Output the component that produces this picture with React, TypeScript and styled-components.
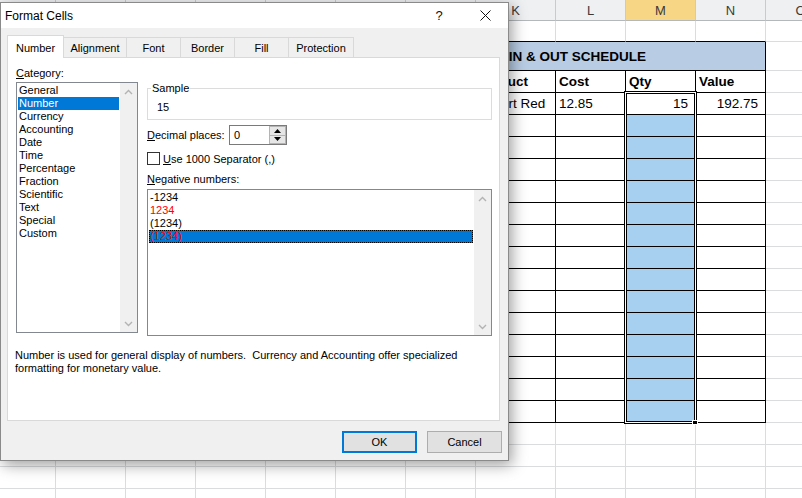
import React from 'react';
import styled, { createGlobalStyle } from 'styled-components';

const GRID = '#dadcdd';
const INK = '#000';

const GlobalStyle = createGlobalStyle`
  html, body { margin: 0; padding: 0; background: #fff; }
  body { overflow: hidden; font-family: "Liberation Sans", Arial, sans-serif; }
  * { box-sizing: border-box; }
`;

const Page = styled.div`
  position: relative;
  width: 802px;
  height: 498px;
  overflow: hidden;
  background: #fff;
`;

/* ---------------- spreadsheet ---------------- */

const Sheet = styled.div`
  display: flex;
  flex-direction: column;
  width: 920px;
  font-family: "Liberation Sans", Arial, sans-serif;
  font-size: 13.5px;
  color: #000;
`;

const Row = styled.div<{ $h: number }>`
  display: flex;
  flex: none;
  height: ${(p) => p.$h}px;
`;

const ColHead = styled.div<{ $w: number; $sel?: boolean }>`
  flex: none;
  width: ${(p) => p.$w}px;
  height: 100%;
  display: flex;
  align-items: center;
  justify-content: center;
  background: ${(p) => (p.$sel ? '#f7d685' : '#eef0f2')};
  border-right: 1px solid #c8cacd;
  border-bottom: 1px solid #b5b8bb;
  color: #3a3a3a;
  font-size: 13px;
`;

const Cell = styled.div<{
  $w: number;
  $bg?: string;
  $r?: string;
  $b?: string;
  $right?: boolean;
  $bold?: boolean;
  $pl?: number;
}>`
  flex: none;
  width: ${(p) => p.$w}px;
  height: 100%;
  display: flex;
  align-items: center;
  justify-content: ${(p) => (p.$right ? 'flex-end' : 'flex-start')};
  padding: 0 ${(p) => (p.$right ? 7 : 0)}px 0 ${(p) => p.$pl ?? 3}px;
  background: ${(p) => p.$bg ?? 'transparent'};
  border-right: 1px solid ${(p) => p.$r ?? GRID};
  border-bottom: 1px solid ${(p) => p.$b ?? GRID};
  font-weight: ${(p) => (p.$bold ? 700 : 400)};
  white-space: nowrap;
  overflow: hidden;
`;

const Selection = styled.div`
  position: absolute;
  left: 624px;
  top: 91px;
  width: 73px;
  height: 333px;
  border: 1px solid #000;
  box-shadow: inset 0 0 0 1px #fff, inset 0 0 0 2px #000;
  pointer-events: none;
`;

const FillHandle = styled.div`
  position: absolute;
  left: 692px;
  top: 420px;
  width: 6px;
  height: 5px;
  background: #000;
  border: 1px solid #fff;
`;

type Col = { id: string; w: number; pl?: number };
const COLS: Col[] = [
  { id: 'D', w: 56 },
  { id: 'E', w: 70 },
  { id: 'F', w: 70 },
  { id: 'G', w: 70 },
  { id: 'H', w: 70 },
  { id: 'I', w: 70 },
  { id: 'J', w: 70 },
  { id: 'K', w: 80, pl: 1 },
  { id: 'L', w: 70 },
  { id: 'M', w: 70 },
  { id: 'N', w: 70 },
  { id: 'O', w: 70 },
  { id: 'P', w: 70 },
];
const T_START = 6; // J
const T_END = 10; // N
const inTable = (i: number) => i >= T_START && i <= T_END;

type CellSpec = { text?: string; right?: boolean; bold?: boolean };

const HEAD: CellSpec[] = [
  { text: 'Date', bold: true },
  { text: 'Product', bold: true },
  { text: 'Cost', bold: true },
  { text: 'Qty', bold: true },
  { text: 'Value', bold: true },
];
const DATA: CellSpec[] = [
  { text: '' },
  { text: 'Desert Red' },
  { text: '12.85' },
  { text: '15', right: true },
  { text: '192.75', right: true },
];

function TableRow({ specs, blueQty }: { specs?: CellSpec[]; blueQty?: boolean }) {
  return (
    <Row $h={22}>
      {COLS.map((c, i) => {
        const t = inTable(i);
        const s = t && specs ? specs[i - T_START] : undefined;
        return (
          <Cell
            key={c.id}
            $w={c.w}
            $pl={c.pl}
            $r={t || i === T_START - 1 ? INK : GRID}
            $b={t ? INK : GRID}
            $bg={blueQty && c.id === 'M' ? '#a7cff0' : undefined}
            $right={s?.right}
            $bold={s?.bold}
          >
            {s?.text}
          </Cell>
        );
      })}
    </Row>
  );
}

function Spreadsheet() {
  const mergedW = COLS.slice(T_START, T_END + 1).reduce((a, c) => a + c.w, 0);
  return (
    <Sheet>
      <Row $h={21}>
        {COLS.map((c) => (
          <ColHead key={c.id} $w={c.w} $sel={c.id === 'M'}>
            {c.id}
          </ColHead>
        ))}
      </Row>
      <Row $h={21}>
        {COLS.map((c, i) => (
          <Cell key={c.id} $w={c.w} $b={inTable(i) ? INK : GRID} />
        ))}
      </Row>
      <Row $h={29}>
        {COLS.slice(0, T_START).map((c, i) => (
          <Cell key={c.id} $w={c.w} $r={i === T_START - 1 ? INK : GRID} />
        ))}
        <Cell $w={mergedW} $bg="#b8cce4" $r={INK} $b={INK} $bold $pl={52}>
          STOCK IN &amp; OUT SCHEDULE
        </Cell>
        {COLS.slice(T_END + 1).map((c) => (
          <Cell key={c.id} $w={c.w} />
        ))}
      </Row>
      <TableRow specs={HEAD} />
      <TableRow specs={DATA} />
      {Array.from({ length: 14 }).map((_, i) => (
        <TableRow key={i} blueQty />
      ))}
      {Array.from({ length: 4 }).map((_, r) => (
        <Row key={r} $h={22}>
          {COLS.map((c) => (
            <Cell key={c.id} $w={c.w} />
          ))}
        </Row>
      ))}
    </Sheet>
  );
}

/* ---------------- dialog ---------------- */

const Dialog = styled.div`
  position: absolute;
  left: 0;
  top: 2px;
  width: 509px;
  display: flex;
  flex-direction: column;
  background: #f0f0f0;
  border: 1px solid #8a8a8a;
  box-shadow: 3px 4px 14px rgba(0, 0, 0, 0.38);
  font-family: "Liberation Sans", Arial, sans-serif;
  font-size: 11px;
  color: #000;
`;

const TitleBar = styled.div`
  height: 25px;
  background: #fff;
  display: flex;
  align-items: center;
  padding-left: 4px;
`;

const TitleText = styled.div`
  flex: 1;
  font-size: 12px;
`;

const TitleButton = styled.div`
  width: 46px;
  height: 100%;
  display: flex;
  align-items: center;
  justify-content: center;
  font-size: 13px;
  color: #111;
`;

const Body = styled.div`
  display: flex;
  flex-direction: column;
  padding: 7px 8px 7px 6px;
`;

const TabStrip = styled.div`
  display: flex;
  align-items: flex-end;
  height: 22px;
`;

const Tab = styled.div<{ $w: number; $active?: boolean }>`
  position: relative;
  z-index: ${(p) => (p.$active ? 2 : 1)};
  flex: none;
  width: ${(p) => p.$w}px;
  height: ${(p) => (p.$active ? 23 : 20)}px;
  margin-bottom: ${(p) => (p.$active ? -1 : 0)}px;
  margin-left: -1px;
  padding-top: ${(p) => (p.$active ? 1 : 0)}px;
  border: 1px solid #d9d9d9;
  border-bottom: none;
  background: ${(p) => (p.$active ? '#fff' : '#f0f0f0')};
  display: flex;
  align-items: center;
  justify-content: center;
  &:first-child {
    margin-left: 0;
  }
`;

const Panel = styled.div`
  height: 364px;
  background: #fff;
  border: 1px solid #d9d9d9;
  padding: 9px 7px 0 8px;
  display: flex;
  flex-direction: column;
`;

const Columns = styled.div`
  display: grid;
  grid-template-columns: 122px 345px;
  column-gap: 9px;
  align-items: start;
`;

const Column = styled.div<{ $top?: number }>`
  display: flex;
  flex-direction: column;
  padding-top: ${(p) => p.$top ?? 0}px;
`;

const Label = styled.div<{ $mt?: number; $mb?: number }>`
  line-height: 13px;
  height: 13px;
  margin-top: ${(p) => p.$mt ?? 0}px;
  margin-bottom: ${(p) => p.$mb ?? 0}px;
  white-space: nowrap;
`;

const ListBox = styled.div<{ $h: number }>`
  height: ${(p) => p.$h}px;
  border: 1px solid #828790;
  background: #fff;
  display: flex;
`;

const ListItems = styled.div`
  flex: 1;
  padding: 1px;
  overflow: hidden;
`;

const ListItem = styled.div<{ $sel?: boolean; $red?: boolean; $focus?: boolean }>`
  height: 13px;
  line-height: 13px;
  padding-left: 1px;
  white-space: nowrap;
  color: ${(p) => (p.$red ? '#ff0000' : p.$sel ? '#fff' : '#000')};
  background: ${(p) => (p.$sel ? '#0078d7' : 'transparent')};
  outline: ${(p) => (p.$focus ? '1px dotted #000' : 'none')};
  outline-offset: -1px;
`;

const ScrollBar = styled.div`
  width: 17px;
  flex: none;
  background: #f0f0f0;
  display: flex;
  flex-direction: column;
  justify-content: space-between;
`;

const ScrollArrow = styled.div`
  height: 17px;
  display: flex;
  align-items: center;
  justify-content: center;
`;

const Group = styled.fieldset`
  margin: 0;
  padding: 7px 9px 5px;
  border: 1px solid #dcdcdc;
  min-width: 0;
`;

const Legend = styled.legend`
  padding: 0 1px;
  margin-left: -6px;
  line-height: 12px;
  font-size: 11px;
`;

const SampleValue = styled.div`
  line-height: 13px;
  height: 13px;
`;

const FieldRow = styled.div<{ $mt: number }>`
  display: flex;
  align-items: center;
  margin-top: ${(p) => p.$mt}px;
`;

const FieldLabel = styled.div`
  width: 82px;
  flex: none;
  white-space: nowrap;
`;

const SpinBox = styled.div`
  width: 58px;
  height: 20px;
  border: 1px solid #7a7a7a;
  background: #fff;
  display: flex;
`;

const SpinValue = styled.div`
  flex: 1;
  padding-left: 4px;
  line-height: 18px;
`;

const SpinButtons = styled.div`
  width: 17px;
  display: flex;
  flex-direction: column;
`;

const SpinButton = styled.div`
  flex: 1;
  display: flex;
  align-items: center;
  justify-content: center;
  background: #e6e6e6;
  border: 1px solid #b4b4b4;
  & + & {
    border-top: none;
  }
`;

const CheckBox = styled.div`
  width: 13px;
  height: 13px;
  flex: none;
  border: 1px solid #333;
  background: #fff;
`;

const CheckLabel = styled.div`
  margin-left: 3px;
  white-space: nowrap;
`;

const Description = styled.div`
  margin-top: 13px;
  margin-left: -1px;
  line-height: 13px;
  white-space: pre;
`;

const Footer = styled.div`
  display: flex;
  justify-content: flex-end;
  gap: 10px;
  margin-top: 10px;
  margin-right: -2px;
`;

const Button = styled.button<{ $default?: boolean }>`
  width: 75px;
  height: 22px;
  padding: 0;
  display: flex;
  align-items: center;
  justify-content: center;
  background: #e1e1e1;
  border: ${(p) => (p.$default ? '2px solid #0078d7' : '1px solid #adadad')};
  font-family: inherit;
  font-size: 11px;
  color: #000;
`;

const Chevron = ({ down }: { down?: boolean }) => (
  <svg width="9" height="6" viewBox="0 0 9 6">
    <polyline
      points={down ? '1,1 4.5,4.5 8,1' : '1,5 4.5,1.5 8,5'}
      fill="none"
      stroke="#b3b3b3"
      strokeWidth="1.4"
    />
  </svg>
);

const Triangle = ({ down }: { down?: boolean }) => (
  <svg width="7" height="4" viewBox="0 0 7 4">
    <polygon points={down ? '0,0 7,0 3.5,4' : '0,4 7,4 3.5,0'} fill="#000" />
  </svg>
);

const Scroll = () => (
  <ScrollBar>
    <ScrollArrow>
      <Chevron />
    </ScrollArrow>
    <ScrollArrow>
      <Chevron down />
    </ScrollArrow>
  </ScrollBar>
);

const TABS = [
  { label: 'Number', w: 57, active: true },
  { label: 'Alignment', w: 64 },
  { label: 'Font', w: 55 },
  { label: 'Border', w: 55 },
  { label: 'Fill', w: 55 },
  { label: 'Protection', w: 66 },
];

const CATEGORIES = [
  'General',
  'Number',
  'Currency',
  'Accounting',
  'Date',
  'Time',
  'Percentage',
  'Fraction',
  'Scientific',
  'Text',
  'Special',
  'Custom',
];

const NEGATIVES = [
  { text: '-1234' },
  { text: '1234', red: true },
  { text: '(1234)' },
  { text: '(1234)', red: true, sel: true },
];

function FormatCells() {
  return (
    <Dialog>
      <TitleBar>
        <TitleText>Format Cells</TitleText>
        <TitleButton>?</TitleButton>
        <TitleButton>
          <svg width="11" height="11" viewBox="0 0 11 11">
            <path d="M0.5 0.5 L10.5 10.5 M10.5 0.5 L0.5 10.5" stroke="#111" strokeWidth="1" fill="none" />
          </svg>
        </TitleButton>
      </TitleBar>
      <Body>
        <TabStrip>
          {TABS.map((t) => (
            <Tab key={t.label} $w={t.w} $active={t.active}>
              {t.label}
            </Tab>
          ))}
        </TabStrip>
        <Panel>
          <Columns>
            <Column>
              <Label $mb={2}>
                <u>C</u>ategory:
              </Label>
              <ListBox $h={251}>
                <ListItems>
                  {CATEGORIES.map((c) => (
                    <ListItem key={c} $sel={c === 'Number'}>
                      {c}
                    </ListItem>
                  ))}
                </ListItems>
                <Scroll />
              </ListBox>
            </Column>
            <Column $top={15}>
              <Group>
                <Legend>Sample</Legend>
                <SampleValue>15</SampleValue>
              </Group>
              <FieldRow $mt={5}>
                <FieldLabel>
                  <u>D</u>ecimal places:
                </FieldLabel>
                <SpinBox>
                  <SpinValue>0</SpinValue>
                  <SpinButtons>
                    <SpinButton>
                      <Triangle />
                    </SpinButton>
                    <SpinButton>
                      <Triangle down />
                    </SpinButton>
                  </SpinButtons>
                </SpinBox>
              </FieldRow>
              <FieldRow $mt={7}>
                <CheckBox />
                <CheckLabel>
                  <u>U</u>se 1000 Separator (,)
                </CheckLabel>
              </FieldRow>
              <Label $mt={8} $mb={3}>
                <u>N</u>egative numbers:
              </Label>
              <ListBox $h={147}>
                <ListItems>
                  {NEGATIVES.map((n, i) => (
                    <ListItem key={i} $red={n.red} $sel={n.sel} $focus={n.sel}>
                      {n.text}
                    </ListItem>
                  ))}
                </ListItems>
                <Scroll />
              </ListBox>
            </Column>
          </Columns>
          <Description>
            {'Number is used for general display of numbers.  Currency and Accounting offer specialized\nformatting for monetary value.'}
          </Description>
        </Panel>
        <Footer>
          <Button $default>OK</Button>
          <Button>Cancel</Button>
        </Footer>
      </Body>
    </Dialog>
  );
}

export default function App() {
  return (
    <>
      <GlobalStyle />
      <Page>
        <Spreadsheet />
        <Selection />
        <FillHandle />
        <FormatCells />
      </Page>
    </>
  );
}
